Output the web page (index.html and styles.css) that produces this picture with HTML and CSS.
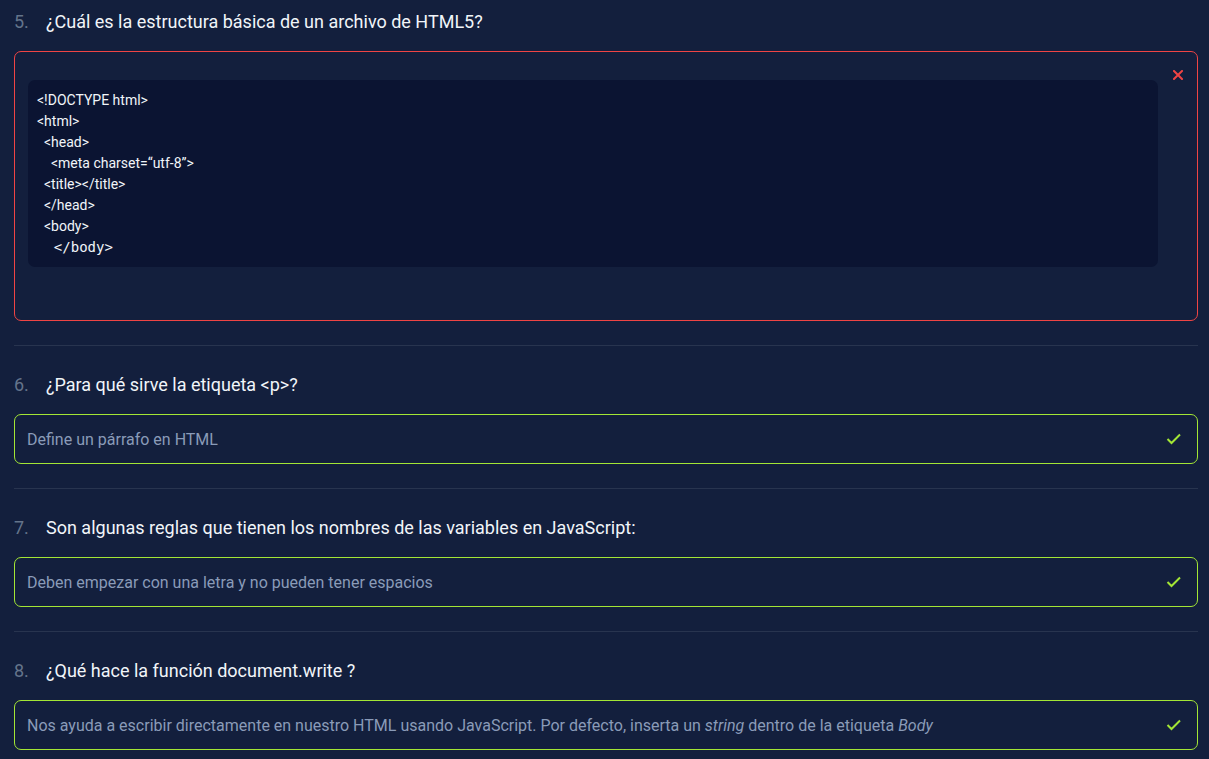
FILE: index.html
```html
<!DOCTYPE html>
<html lang="es">
<head>
<meta charset="utf-8">
<title>Quiz</title>
<link rel="stylesheet" href="styles.css">
</head>
<body>
<main class="quiz">
  <section class="item">
    <h2 class="question"><span class="num">5.</span><span class="qtext">¿Cuál es la estructura básica de un archivo de HTML5?</span></h2>
    <div class="answer wrong code-answer">
      <pre class="code">&lt;!DOCTYPE html&gt;
&lt;html&gt;
  &lt;head&gt;
    &lt;meta charset=“utf-8”&gt;
  &lt;title&gt;&lt;/title&gt;
  &lt;/head&gt;
  &lt;body&gt;
<span class="mono">  &lt;/body&gt;</span></pre>
      <svg class="icon x" width="10" height="10" viewBox="0 0 10 10"><path d="M1 1 L9 9 M9 1 L1 9" stroke="#ef4444" stroke-width="2" stroke-linecap="square" fill="none"/></svg>
    </div>
  </section>
  <section class="item">
    <h2 class="question"><span class="num">6.</span><span class="qtext">¿Para qué sirve la etiqueta &lt;p&gt;?</span></h2>
    <div class="answer right">
      <p class="atext">Define un párrafo en HTML</p>
      <svg class="icon check" width="16" height="12" viewBox="0 0 16 12"><path d="M1.5 6 L5.5 10 L14 1.5" stroke="#a3e635" stroke-width="2" fill="none"/></svg>
    </div>
  </section>
  <section class="item">
    <h2 class="question"><span class="num">7.</span><span class="qtext">Son algunas reglas que tienen los nombres de las variables en JavaScript:</span></h2>
    <div class="answer right">
      <p class="atext">Deben empezar con una letra y no pueden tener espacios</p>
      <svg class="icon check" width="16" height="12" viewBox="0 0 16 12"><path d="M1.5 6 L5.5 10 L14 1.5" stroke="#a3e635" stroke-width="2" fill="none"/></svg>
    </div>
  </section>
  <section class="item last">
    <h2 class="question"><span class="num">8.</span><span class="qtext">¿Qué hace la función document.write ?</span></h2>
    <div class="answer right">
      <p class="atext">Nos ayuda a escribir directamente en nuestro HTML usando JavaScript. Por defecto, inserta un <em>string</em> dentro de la etiqueta <em>Body</em></p>
      <svg class="icon check" width="16" height="12" viewBox="0 0 16 12"><path d="M1.5 6 L5.5 10 L14 1.5" stroke="#a3e635" stroke-width="2" fill="none"/></svg>
    </div>
  </section>
</main>
</body>
</html>
```

FILE: styles.css
```css
html, body {
  margin: 0;
  padding: 0;
  background: #131f3d;
  font-family: Roboto, "Liberation Sans", sans-serif;
}
.quiz {
  padding: 0 11px 0 14px;
  display: flex;
  flex-direction: column;
}
.item {
  border-bottom: 1px solid #28344f;
  padding-bottom: 24px;
  margin-bottom: 17px;
}
.item.last {
  border-bottom: none;
}
.question {
  margin: 0 0 9px 0;
  height: 42px;
  display: flex;
  align-items: center;
  font-size: 18px;
  font-weight: 400;
  color: #f1f5f9;
}
.num {
  color: #64748b;
  width: 32px;
  flex: none;
}
.answer {
  border: 1px solid;
  border-radius: 7px;
  display: flex;
  align-items: center;
  justify-content: space-between;
  padding: 0 15px 0 12px;
  min-height: 48px;
}
.answer.wrong { border-color: #ef4444; }
.answer.right { border-color: #a3e635; }
.code-answer {
  align-items: flex-start;
  padding: 18px 14px 53px 13px;
}
.code {
  flex: 1;
  margin: 10px 15px 0 0;
  background: #0b1432;
  border-radius: 7px;
  padding: 10px 9px 9px 9px;
  font-family: Roboto, "Liberation Sans", sans-serif;
  font-size: 14px;
  line-height: 21px;
  color: #f1f5f9;
  white-space: pre;
}
.mono {
  font-family: "DejaVu Sans Mono", monospace;
  font-size: 14px;
}
.icon.x {
  flex: none;
}
.atext {
  margin: 0;
  font-size: 16px;
  color: #8a9bb8;
}
.atext em {
  font-style: italic;
}
.icon.check { flex: none; }
```
